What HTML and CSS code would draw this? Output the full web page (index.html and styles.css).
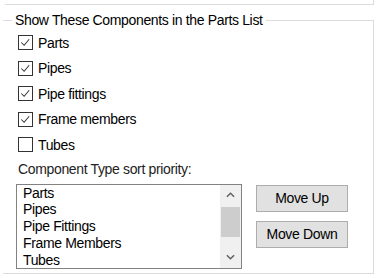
FILE: index.html
```html
<!DOCTYPE html>
<html lang="en">
<head>
    <meta charset="UTF-8">
    <title>Parts List Options</title>
    <link rel="stylesheet" href="styles.css">
</head>
<body>
    <div class="prev-group"></div>

    <fieldset class="group">
        <legend>Show These Components in the Parts List</legend>

        <div class="check-row">
            <span class="check on"><svg viewBox="0 0 14 14"><polyline points="2.5,7 5.5,10 11,3.5"/></svg></span>
            <span>Parts</span>
        </div>
        <div class="check-row">
            <span class="check on"><svg viewBox="0 0 14 14"><polyline points="2.5,7 5.5,10 11,3.5"/></svg></span>
            <span>Pipes</span>
        </div>
        <div class="check-row">
            <span class="check on"><svg viewBox="0 0 14 14"><polyline points="2.5,7 5.5,10 11,3.5"/></svg></span>
            <span>Pipe fittings</span>
        </div>
        <div class="check-row">
            <span class="check on"><svg viewBox="0 0 14 14"><polyline points="2.5,7 5.5,10 11,3.5"/></svg></span>
            <span>Frame members</span>
        </div>
        <div class="check-row">
            <span class="check"></span>
            <span>Tubes</span>
        </div>

        <div class="sort-label">Component Type sort priority:</div>

        <div class="sort-row">
            <div class="listbox">
                <ul class="items">
                    <li>Parts</li>
                    <li>Pipes</li>
                    <li>Pipe Fittings</li>
                    <li>Frame Members</li>
                    <li>Tubes</li>
                </ul>
                <div class="scrollbar">
                    <div class="arrow">
                        <svg viewBox="0 0 10 6"><polyline points="1,5 5,1 9,5"/></svg>
                    </div>
                    <div class="track"><div class="thumb"></div></div>
                    <div class="arrow">
                        <svg viewBox="0 0 10 6"><polyline points="1,1 5,5 9,1"/></svg>
                    </div>
                </div>
            </div>
            <div class="buttons">
                <button type="button">Move Up</button>
                <button type="button">Move Down</button>
            </div>
        </div>
    </fieldset>
</body>
</html>
```

FILE: styles.css
```css
body {
    margin: 0;
    background: #fff;
    font-family: 'Liberation Sans', Arial, sans-serif;
    font-size: 14px;
    letter-spacing: -0.35px;
    color: #000;
}
.prev-group {
    margin-left: 5px;
    width: 368px;
    height: 4px;
    border-bottom: 1px solid #dcdcdc;
    border-right: 1px solid #dcdcdc;
}
.group {
    margin: 7px 0 0 3px;
    padding: 2px 0 0 0;
    width: 371px;
    height: 262px;
    box-sizing: border-box;
    border: 1px solid #dcdcdc;
    border-left: none;
    min-width: 0;
}
.group legend {
    margin-left: 9px;
    padding: 0 3px;
    line-height: 16px;
}
.check-row {
    display: flex;
    align-items: center;
    height: 25.5px;
    padding-left: 15px;
}
.check {
    width: 15px;
    height: 15px;
    box-sizing: border-box;
    border: 1px solid #333;
    background: #fff;
    margin-right: 5px;
    display: flex;
}
.check svg {
    width: 13px;
    height: 13px;
    fill: none;
    stroke: #333;
    stroke-width: 1.1;
}
.sort-label {
    padding-left: 15px;
    margin-top: 3px;
    line-height: 16px;
    color: #222;
}
.sort-row {
    display: flex;
    margin-top: 7px;
    padding-left: 13px;
}
.listbox {
    width: 226px;
    height: 85px;
    box-sizing: border-box;
    border: 1px solid #828282;
    display: flex;
}
.items {
    list-style: none;
    margin: 0;
    padding: 0 0 0 6px;
    flex: 1;
    overflow: hidden;
}
.items li {
    line-height: 16.8px;
}
.scrollbar {
    width: 21px;
    background: #f0f0f0;
    display: flex;
    flex-direction: column;
}
.arrow {
    height: 21px;
    display: flex;
    align-items: center;
    justify-content: center;
}
.arrow svg {
    width: 9px;
    height: 6px;
    fill: none;
    stroke: #606060;
    stroke-width: 1.6;
}
.track {
    flex: 1;
    padding-top: 1px;
}
.thumb {
    height: 30px;
    margin: 0 1px;
    background: #cdcdcd;
}
.buttons {
    display: flex;
    flex-direction: column;
    gap: 9px;
    margin-left: 14px;
    padding-top: 1px;
}
button {
    width: 92px;
    height: 27px;
    padding: 0;
    border: 1px solid #adadad;
    background: #e1e1e1;
    font-family: 'Liberation Sans', Arial, sans-serif;
    font-size: 14px;
    letter-spacing: -0.35px;
    color: #000;
}
```
